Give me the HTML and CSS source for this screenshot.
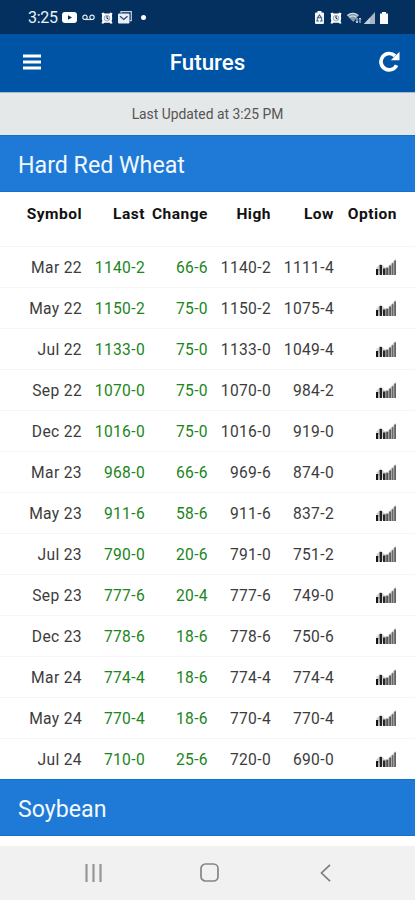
FILE: index.html
```html
<!DOCTYPE html>
<html lang="en">
<head>
<meta charset="utf-8">
<title>Futures</title>
<link rel="stylesheet" href="styles.css">
</head>
<body>
<svg class="defs" aria-hidden="true">
  <symbol id="alarm" viewBox="0 0 12 12"><path d="M.6 1.2 2.6.4l1 1.200h4.800l1-1.200 2 .8-.5 2.400.3 2.800-.6 2.600.9 2.200-1.700.6-1.200-1H3.400l-1.200 1-1.700-.6.9-2.200L.8 6.400l.3-2.800z" fill="currentColor"/><circle cx="6" cy="6.200" r="2.900" fill="#e3eaf1" stroke="#7f99b3" stroke-width=".8"/><path d="M6 4v2.300l1.600.8" fill="none" stroke="#03305f" stroke-width="1"/></symbol>
  <symbol id="bars" viewBox="0 0 22 18"><path d="M1 10l4.500-4.500 4 3.800 3-.4L21 .8V17H9z" fill="#d2d2d2"/><path d="M1 11h2.300v6H1z" fill="#161616"/><path d="M4.600 7H7v10H4.600z" fill="#222"/><path d="M8 10.500h2.400V17H8z" fill="#292929"/><path d="M11.200 9.800h2.200V17h-2.200z" fill="#555"/><path d="M14.200 7.500h2V17h-2z" fill="#5b5b5b"/><path d="M16.800 5.200h1.700V17h-1.700z" fill="#686868"/><path d="M19.200 2.500H21V17h-1.800z" fill="#626262"/></symbol>
</svg>
<header>
  <div class="status">
    <span class="clock">3:25</span>
    <svg class="tube" width="15" height="11" viewBox="0 0 15 11"><rect width="15" height="11" rx="3" fill="#fff"/><path d="m6 3.300 4 2.200-4 2.200z" fill="#03305f"/></svg>
    <svg class="voice" width="13" height="7" viewBox="0 0 13 7"><path d="M3 5.500h7" stroke="#dce5ed" stroke-width="1.200"/><g fill="none" stroke="#dce5ed" stroke-width="1.200"><circle cx="3" cy="3.300" r="2.200"/><circle cx="10" cy="3.300" r="2.200"/></g></svg>
    <svg class="alarm-left" width="12" height="12"><use href="#alarm"/></svg>
    <svg class="mail" width="14" height="13" viewBox="0 0 14 13"><path d="M3 2V.7h10.300v9H12" fill="none" stroke="#c6d3df" stroke-width="1.200"/><rect y="2.500" width="11.500" height="10" rx="1" fill="#e8eef4"/><path d="m2 5.300 3.800 3.200 3.700-3.200" fill="none" stroke="#1c4571" stroke-width="1.200"/></svg>
    <span class="dot"></span>
    <span class="space"></span>
    <svg class="saver" width="9" height="13" viewBox="0 0 9 13"><path d="M2.500 0h4v1.500H8q1 0 1 1V12q0 1-1 1H1q-1 0-1-1V2.500q0-1 1-1h1.500z" fill="#f3f6f9"/><path d="m4.500 4 2 2.800h-4zM2.500 7.500 2 10h2m1 0h2l-.5-2.500" fill="none" stroke="#3c5f85" stroke-width="1.100"/></svg>
    <svg class="alarm-right" width="12" height="12"><use href="#alarm"/></svg>
    <svg class="wifi" width="15" height="12" viewBox="0 0 15 12"><path d="M0 3.500Q5.800-1.800 11.700 3.500L6.300 10z" fill="#8399ae"/><path d="M.4 3.500Q5.800-1 11.300 3.500M2.400 5.300q3.500-2.700 6.800 0" fill="none" stroke="#dce5ed" stroke-width="1.100"/><path d="M10 6v5M13 6v5M9 9.200l1 1.600 1-1.600M12 7.400 13 6l1 1.400" fill="none" stroke="#d1dce6"/></svg>
    <svg class="cell" width="11" height="12" viewBox="0 0 11 12"><path d="M0 12 11 0v12z" fill="#a8b7c7"/><path d="M0 12l6-6.500V12z" fill="#c3ced9"/></svg>
    <svg class="battery" width="8" height="12" viewBox="0 0 8 12"><path d="M2 0h4v1.500h2V12H0V1.500h2z" fill="#f8fafb"/></svg>
  </div>
  <div class="appbar">
    <svg width="18" height="16" viewBox="0 0 18 16"><path d="M0 2h18M0 8h18M0 14h18" stroke="#fff" stroke-width="2.900"/></svg>
    <h1>Futures</h1>
    <svg width="21" height="21" viewBox="0 0 21 21"><path d="M17.600 14.200A8.200 8.200 0 1 1 16 4.900" fill="none" stroke="#fff" stroke-width="3.700"/><path d="M20.500.8v8.400h-8.700z" fill="#fff"/></svg>
  </div>
</header>
<main>
  <div class="updated">Last Updated at 3:25 PM</div>
  <h2>Hard Red Wheat</h2>
  <table>
    <thead><tr><th>Symbol</th><th>Last</th><th>Change</th><th>High</th><th>Low</th><th>Option</th></tr></thead>
    <tbody id="quotes"></tbody>
  </table>
  <h2>Soybean</h2>
</main>
<nav>
  <svg class="recent" width="18" height="18" viewBox="0 0 18 18"><path d="M1.500 0v18M8.500 0v18M15.500 0v18" stroke="#969696" stroke-width="2.200"/></svg>
  <svg class="home" width="19" height="19" viewBox="0 0 19 19"><rect x="1" y="1" width="17" height="17" rx="4.500" fill="none" stroke="#858585" stroke-width="1.700"/></svg>
  <svg class="back" width="11" height="18" viewBox="0 0 11 18"><path d="M10 .8 1.500 9l8.500 8.200" fill="none" stroke="#7d7d7d" stroke-width="1.700"/></svg>
</nav>
<script src="script.js"></script>
</body>
</html>
```
FILE: styles.css
```css
* { box-sizing: border-box; }
body { margin: 0; width: 415px; height: 900px; overflow: hidden; display: flex; flex-direction: column; background: #fff; color: #3c3c3c; font-family: Roboto, "Liberation Sans", sans-serif; }
svg { display: block; flex: none; }
.defs { width: 0; height: 0; position: absolute; }
.status { height: 34px; background: #03305f; color: #fff; display: flex; align-items: center; padding: 1px 27px 0 28px; }
.clock { font-size: 16px; letter-spacing: -.3px; width: 34px; color: #edf2f7; }
.voice { margin-left: 5px; }
.alarm-left { margin-left: 6px; }
.mail { margin-left: 5px; }
.dot { width: 5px; height: 5px; border-radius: 50%; background: #fff; margin-left: 9px; }
.space { flex: 1; }
.saver { margin-right: 6px; }
.alarm-right, .wifi { margin-right: 5px; }
.cell { margin-left: -3px; }
.battery { margin-left: 5px; }
.appbar { height: 58px; background: #0054a6; display: grid; grid-template-columns: 18px 1fr 21px; align-items: center; padding: 0 15px 3px 23px; }
h1 { color: #fff; font-size: 22.300px; font-weight: 500; line-height: 28px; margin: 0; padding-right: 5px; text-align: center; }
.updated { height: 43px; background: #e5e8e9; border-top: 1px solid #a9b9cc; text-align: center; font-size: 13.850px; line-height: 43px; color: #555; }
h2 { height: 57px; margin: 0; padding-left: 18px; background: #1e7ad6; border-top: 1px solid #1471c8; border-bottom: 1px solid #1471c8; color: #f2f8fe; font-size: 23.200px; font-weight: 400; line-height: 58px; }
table { width: 415px; table-layout: fixed; border-collapse: collapse; font-size: 15.600px; letter-spacing: .35px; }
th, td { width: 63px; padding: 0; text-align: right; white-space: nowrap; }
th:first-child { width: 82px; }
th:last-child, td:last-child { width: 81px; padding-right: 18px; }
th { height: 54px; color: #111; font-size: 15.500px; letter-spacing: .5px; font-weight: 700; padding-bottom: 10px; }
td { height: 41px; padding-top: 2px; }
td:last-child { padding-top: 0; }
tbody tr { border-top: 1px solid #f5f5f5; }
.up { color: #208520; }
td svg { margin-left: auto; }
nav { margin-top: 10px; flex: 1; background: #f1f1f1; display: flex; align-items: center; padding: 0 84px 1px 85px; }
.home { margin-left: 97px; }
.back { margin-left: 101px; }
```
FILE: script.js
```js
const quotes = [
  ['Mar 22', '1140-2', '66-6', '1140-2', '1111-4'],
  ['May 22', '1150-2', '75-0', '1150-2', '1075-4'],
  ['Jul 22', '1133-0', '75-0', '1133-0', '1049-4'],
  ['Sep 22', '1070-0', '75-0', '1070-0', '984-2'],
  ['Dec 22', '1016-0', '75-0', '1016-0', '919-0'],
  ['Mar 23', '968-0', '66-6', '969-6', '874-0'],
  ['May 23', '911-6', '58-6', '911-6', '837-2'],
  ['Jul 23', '790-0', '20-6', '791-0', '751-2'],
  ['Sep 23', '777-6', '20-4', '777-6', '749-0'],
  ['Dec 23', '778-6', '18-6', '778-6', '750-6'],
  ['Mar 24', '774-4', '18-6', '774-4', '774-4'],
  ['May 24', '770-4', '18-6', '770-4', '770-4'],
  ['Jul 24', '710-0', '25-6', '720-0', '690-0']
];
document.getElementById('quotes').innerHTML = quotes.map(row =>
  '<tr>' + row.map((value, i) => `<td${i === 1 || i === 2 ? ' class="up"' : ''}>${value}</td>`).join('') +
  '<td><svg width="22" height="18"><use href="#bars"/></svg></td></tr>'
).join('');
```
